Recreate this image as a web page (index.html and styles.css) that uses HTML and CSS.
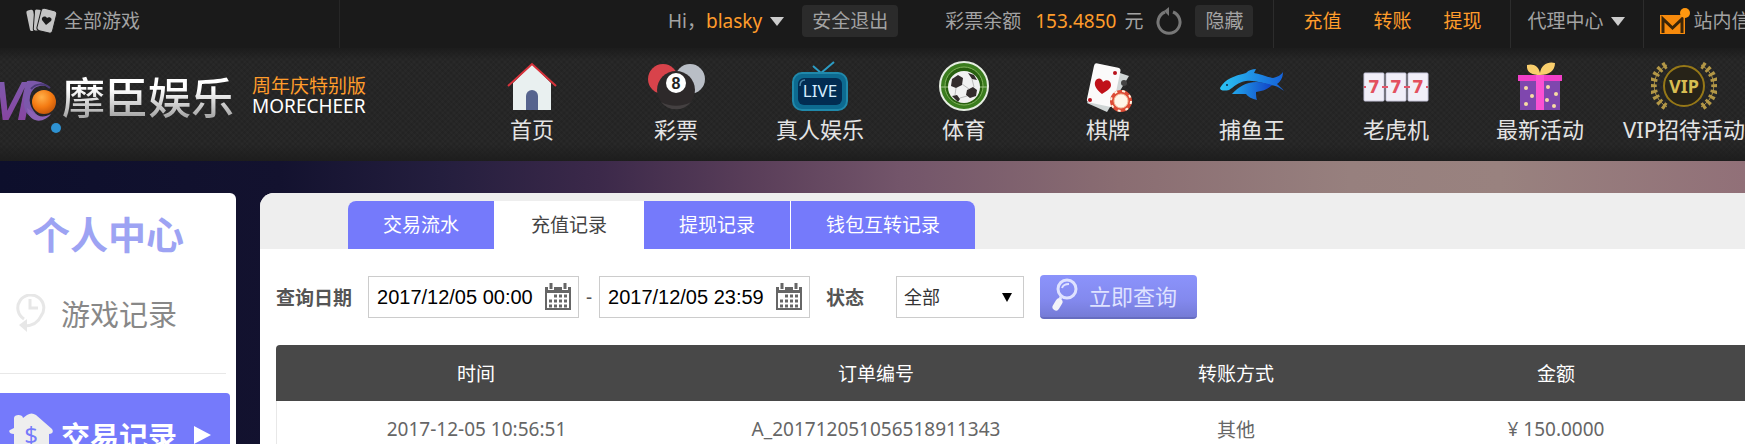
FILE: index.html
```html
<!DOCTYPE html>
<html lang="zh-CN">
<head>
  <meta charset="utf-8">
  <title>摩臣娱乐</title>
  <link rel="stylesheet" href="styles.css">
</head>
<body>
  <div class="topbar">
    <a href="#" class="all-games">
      <svg width="32" height="28" viewBox="0 0 32 28">
        <g fill="#c4c4c4">
          <rect x="3" y="3" width="7" height="21" rx="2" transform="rotate(-12 6 13)"/>
          <rect x="9" y="2" width="7" height="22" rx="2" transform="rotate(4 12 12)" stroke="#1a1a1a"/>
          <rect x="14" y="2" width="16" height="23" rx="3" transform="rotate(14 21 13)" stroke="#1a1a1a"/>
        </g>
        <path d="M21 18l-4-5c-1-3 3-5 5-2 2-2 6 0 4 3z" fill="#1a1a1a"/>
      </svg>
      全部游戏
    </a>
    <div class="user">
      <span>Hi，</span><a href="#" class="orange">blasky</a>
      <span class="caret"></span>
      <button type="button" class="top-btn">安全退出</button>
    </div>
    <div class="balance">
      <span>彩票余额</span>
      <span class="orange amount">153.4850</span>
      <span>元</span>
      <svg class="refresh" width="28" height="28" viewBox="0 0 28 28">
        <path d="M18 5a11 11 0 1 1-8 0" fill="none" stroke="#777" stroke-width="3"/>
        <path d="M14 0v9l-5-5z" fill="#777"/>
      </svg>
      <button type="button" class="top-btn">隐藏</button>
    </div>
    <div class="money">
      <a href="#" class="orange">充值</a>
      <a href="#" class="orange">转账</a>
      <a href="#" class="orange">提现</a>
    </div>
    <div class="agent"><a href="#">代理中心</a><span class="caret"></span></div>
    <a href="#" class="mail">
      <svg width="32" height="28" viewBox="0 0 32 28">
        <rect x="1" y="8" width="25" height="19" fill="#f78a0c"/>
        <path d="M4 26V12l9.500 9L23 12v14" fill="none" stroke="#3a2508" stroke-width="3"/>
        <circle cx="26" cy="6" r="5" fill="#ff970f"/>
      </svg>
      站内信
    </a>
  </div>

  <header class="header">
    <a href="#" class="logo">
      <svg width="62" height="60" viewBox="0 0 62 60">
        <defs>
          <linearGradient id="purple" x1="0" y1="0" x2="0" y2="1">
            <stop offset="0" stop-color="#7b5fb0"/><stop offset="1" stop-color="#8a3f9d"/>
          </linearGradient>
          <radialGradient id="ball" cx=".4" cy=".3" r=".7">
            <stop offset="0" stop-color="#ffb04a"/><stop offset=".6" stop-color="#f47a12"/><stop offset="1" stop-color="#c95a0a"/>
          </radialGradient>
        </defs>
        <text x="-15" y="44" class="logo-m" fill="url(#purple)">M</text>
        <path d="M27 5c9-1 17 1 22 6-7-3-15-1-18 6-4 9 1 19 11 26-12 2-19-7-18-18 0-7 1-14 3-20z" fill="#7c58ab"/>
        <path d="M33 36c5 5 11 6 18 2-4 5-10 8-16 6-5-2-7-6-8-12z" fill="#8c62b4"/>
        <path d="M31 13c5-6 13-6 19-1" fill="none" stroke="#4c3b78" stroke-width="2"/>
        <circle cx="44" cy="26" r="12" fill="url(#ball)"/>
        <circle cx="56" cy="52" r="5" fill="#2e92d2"/>
      </svg>
      <span class="logo-text">摩臣娱乐</span>
      <span class="slogan"><em>周年庆特别版</em>MORECHEER</span>
    </a>
    <nav class="nav">
      <a href="#">
        <svg width="50" height="50" viewBox="0 0 50 50">
          <path d="M6 49V22L25 3l19 19v27z" fill="#e9f0f0"/>
          <path d="M1 25L25 3l24 22" fill="none" stroke="#d9333c" stroke-width="2"/>
          <path d="M19 49V35a6 6 0 0 1 12 0v14z" fill="#56648e"/>
        </svg>
        首页
      </a>
      <a href="#">
        <svg width="58" height="50" viewBox="0 0 58 50">
          <circle cx="16" cy="18" r="15" fill="#d8434b"/>
          <circle cx="43" cy="18" r="15" fill="#b9bec6"/>
          <circle cx="29" cy="29" r="19" fill="#2d292a"/>
          <path d="M14 41a19 19 0 0 0 30 0c-9 5-21 5-30 0z" fill="#444041"/>
          <circle cx="29" cy="22" r="10" fill="#fff"/>
          <text x="29" y="28" class="ball-num">8</text>
        </svg>
        彩票
      </a>
      <a href="#">
        <svg width="58" height="50" viewBox="0 0 58 50">
          <path d="M22 5l8 7L43 1" fill="none" stroke="#2c9cc4" stroke-width="2"/>
          <rect x="2" y="12" width="54" height="37" rx="9" fill="#0d6a90" stroke="#2089ab" stroke-width="2"/>
          <rect x="7" y="17" width="44" height="27" rx="6" fill="#022c52"/>
          <path d="M9 25c0-4 1-6 5-6" fill="none" stroke="#4d86a8" stroke-width="1.500"/>
          <text x="29" y="36" class="live">LIVE</text>
        </svg>
        真人娱乐
      </a>
      <a href="#">
        <svg width="50" height="50" viewBox="0 0 50 50">
          <circle cx="25" cy="25" r="24" fill="#3b7d1e" stroke="#e6eee2" stroke-width="2"/>
          <circle cx="25" cy="25" r="19" fill="#28600f" stroke="#83b45e" stroke-width="1"/>
          <path d="M2 26h46" stroke="#9fc386"/>
          <circle cx="25" cy="26" r="16" fill="#f1f1f1"/>
          <path d="M13 18l6-4 5 3-1 7-6 3-5-2zM28 29l6-3 4 3-1 6-6 2-4-3zM29 12l6 2 3 5-5-1zM13 35l5-1 3 4-2 3z" fill="#332c2c"/>
          <path d="M23 23l7 5M17 27l-1 7M21 37l7-2M33 18l2 8" stroke="#bbb" fill="none"/>
        </svg>
        体育
      </a>
      <a href="#">
        <svg width="50" height="52" viewBox="0 0 50 52">
          <path d="M25 8l21 7-22 36-20-9z" fill="#cfd5d5"/>
          <rect x="7" y="4" width="27" height="40" rx="3" fill="#fbfafa" transform="rotate(12 20 25)"/>
          <path d="M19 33c-5-4-8-8-7-12 2-5 7-4 8 0 3-3 8-2 8 3 0 4-5 6-9 9z" fill="#c01119"/>
          <circle cx="32" cy="12" r="2" fill="#b8111b"/><circle cx="7" cy="39" r="2" fill="#b8111b"/>
          <circle cx="41" cy="22" r="3" fill="#444"/>
          <circle cx="38" cy="40" r="11" fill="#dd4b35"/>
          <circle cx="38" cy="40" r="10" fill="none" stroke="#fff1df" stroke-width="2" stroke-dasharray="3 5"/>
          <circle cx="38" cy="40" r="7" fill="#fff5e8" stroke="#f5bf9e"/>
        </svg>
        棋牌
      </a>
      <a href="#">
        <svg width="66" height="50" viewBox="0 0 66 50">
          <defs>
            <linearGradient id="fish-top" x1="0" y1="0" x2="1" y2="0">
              <stop offset="0" stop-color="#2bc3f2"/><stop offset="1" stop-color="#1560d8"/>
            </linearGradient>
            <linearGradient id="fish-belly" x1="0" y1="0" x2="1" y2="0">
              <stop offset="0" stop-color="#22a8ec"/><stop offset="1" stop-color="#1242c6"/>
            </linearGradient>
          </defs>
          <path d="M1 27c5-9 14-12 26-15 3-3 6-4 10-4l-2 4c7 1 12 4 19 5 5-1 8-3 10-6 0 6-3 10-6 12 2 2 5 4 7 7-5-4-9-6-14-6-8-2-15-5-24-4-8 1-12 6-17 9-4 1-9 1-9-2z" fill="url(#fish-top)"/>
          <path d="M13 33c6-7 14-12 24-12 7 0 12 2 16 3-4 4-9 6-16 7 0 3 0 5 1 8-5-1-9-3-11-6-5 0-9 0-14 0z" fill="url(#fish-belly)"/>
          <circle cx="8" cy="24" r="1" fill="#0b2742"/>
        </svg>
        捕鱼王
      </a>
      <a href="#">
        <svg width="66" height="50" viewBox="0 0 66 50">
          <g fill="#f1eff8" stroke="#c9c8dd">
            <rect x="1" y="12" width="20" height="28" rx="1"/><rect x="23" y="12" width="20" height="28" rx="1"/><rect x="45" y="12" width="20" height="28" rx="1"/>
          </g>
          <path d="M1 26h2M19 26h6M41 26h6M63 26h2" stroke="#e3566b" stroke-width="2"/>
          <text x="11" y="32" class="seven">7</text><text x="33" y="32" class="seven">7</text><text x="55" y="32" class="seven">7</text>
        </svg>
        老虎机
      </a>
      <a href="#">
        <svg width="46" height="50" viewBox="0 0 46 50">
          <path d="M23 14C16 14 9 12 10 4c6-2 12 1 13 8C24 4 31 0 38 2c0 8-6 12-15 12z" fill="#f9ce6c"/>
          <rect x="3" y="18" width="40" height="31" fill="#7f47ae"/>
          <rect x="1" y="14" width="44" height="6" fill="#f23fc8"/>
          <rect x="19" y="14" width="8" height="35" fill="#fb51d3"/>
          <g fill="#f8dca4"><circle cx="9" cy="27" r="2"/><circle cx="15" cy="35" r="2"/><circle cx="9" cy="43" r="2"/><circle cx="31" cy="26" r="2"/><circle cx="39" cy="33" r="2"/><circle cx="30" cy="39" r="2"/><circle cx="37" cy="45" r="2"/></g>
        </svg>
        最新活动
      </a>
      <a href="#">
        <svg width="66" height="50" viewBox="0 0 66 50">
          <circle cx="33" cy="25" r="20" fill="#272318" stroke="#967817" stroke-width="2"/>
          <g fill="none" stroke="#b39746">
            <path d="M16 4C-1 13-1 36 16 46M50 4c17 9 17 32 0 42"/>
            <path d="M15 4C-2 13-2 36 15 46M51 4c17 9 17 32 0 42" stroke-width="7" stroke-dasharray="3 3"/>
          </g>
          <text x="33" y="32" class="vip">VIP</text>
        </svg>
        VIP招待活动
      </a>
    </nav>
  </header>

  <main class="content">
    <aside class="sidebar">
      <h2>个人中心</h2>
      <a href="#" class="side-item">
        <svg width="32" height="38" viewBox="0 0 32 38">
          <path d="M9 25A13 13 0 1 1 26 22C23 29 16 32 9 32" fill="none" stroke="#e7e7e7" stroke-width="3"/>
          <path d="M15 5v9h8" fill="none" stroke="#e7e7e7" stroke-width="3"/>
          <path d="M12 25v13l-8-7z" fill="#e7e7e7"/>
        </svg>
        游戏记录
      </a>
      <a href="#" class="side-item active">
        <svg width="44" height="44" viewBox="0 0 44 44">
          <path d="M5 15V5c0-4 9-4 9 0l4-3c3-2 6-2 9 0l16 14c2 3 0 5-3 5v22H5V21c-4 0-6-3-4-4z" fill="#eee"/>
          <text x="22" y="31" class="dollar">$</text>
        </svg>
        交易记录
        <svg class="arrow" width="18" height="18" viewBox="0 0 18 18"><path d="M0 0l17 9-17 9z" fill="#fff"/></svg>
      </a>
    </aside>

    <section class="panel">
      <div class="panel-head">
        <ul class="tabs">
          <li><a href="#">交易流水</a></li>
          <li><a href="#" class="current">充值记录</a></li>
          <li><a href="#">提现记录</a></li>
          <li><a href="#">钱包互转记录</a></li>
        </ul>
      </div>

      <form class="search">
        <label for="date_from">查询日期</label>
        <span class="date-box">
          <input type="text" id="date_from" value="2017/12/05 00:00">
          <svg width="28" height="28" viewBox="0 0 28 28">
            <path d="M1 4h26v6H1z" fill="#666"/>
            <path d="M2 5v21h24V5" fill="none" stroke="#666" stroke-width="2"/>
            <path d="M7 0v7M21 0v7" stroke="#fff" stroke-width="6"/><path d="M7 0v6M21 0v6" stroke="#666" stroke-width="3"/>
            <path d="M10 13h14M5 18h19M5 23h19" stroke="#666" stroke-width="3" stroke-dasharray="3 2"/>
          </svg>
        </span>
        <label for="date_to" class="dash">-</label>
        <span class="date-box">
          <input type="text" id="date_to" value="2017/12/05 23:59">
          <svg width="28" height="28" viewBox="0 0 28 28">
            <path d="M1 4h26v6H1z" fill="#666"/>
            <path d="M2 5v21h24V5" fill="none" stroke="#666" stroke-width="2"/>
            <path d="M7 0v7M21 0v7" stroke="#fff" stroke-width="6"/><path d="M7 0v6M21 0v6" stroke="#666" stroke-width="3"/>
            <path d="M10 13h14M5 18h19M5 23h19" stroke="#666" stroke-width="3" stroke-dasharray="3 2"/>
          </svg>
        </span>
        <label for="status" class="status-label">状态</label>
        <span class="select-box">
          <select id="status"><option>全部</option></select>
        </span>
        <button type="submit" class="search-btn">
          <svg width="26" height="34" viewBox="0 0 26 34">
            <circle cx="15" cy="11" r="9" fill="none" stroke="#dfe2ff" stroke-width="3"/>
            <path d="M10 10c1-3 4-4 7-4" fill="none" stroke="#dfe2ff" stroke-width="2"/>
            <path d="M9 19l-2 4" stroke="#dfe2ff" stroke-width="3"/>
            <path d="M7 24l-3 5" stroke="#f3f3f8" stroke-width="7" stroke-linecap="round"/>
          </svg>
          立即查询
        </button>
      </form>

      <table class="records">
        <colgroup><col class="wide"><col class="wide"><col class="mid"><col class="mid"><col></colgroup>
        <thead>
          <tr><th>时间</th><th>订单编号</th><th>转账方式</th><th>金额</th><th></th></tr>
        </thead>
        <tbody>
          <tr><td>2017-12-05 10:56:51</td><td>A_201712051056518911343</td><td>其他</td><td>¥ 150.0000</td><td></td></tr>
        </tbody>
      </table>
    </section>
  </main>
</body>
</html>
```
FILE: styles.css
```css
:root {
  --main-color: #757afb;
  --orange: #ff9c2b;
  --text-gray: #a3a3a3;
}

* {
  box-sizing: border-box;
}

body {
  font-family: "Noto Sans", "Noto Sans CJK SC", sans-serif;
  font-size: 19px;
  margin: 0;
  min-height: 100vh;
  display: flex;
  flex-direction: column;
  overflow: hidden;
  white-space: nowrap;
  background-color: #0d0f30;
}

a {
  color: inherit;
  text-decoration: none;
}

button, select {
  font-family: inherit;
}

svg {
  flex: none;
}

/* top bar */
.topbar {
  display: flex;
  height: 48px;
  line-height: 44px;
  background-color: #1a1a1a;
  color: var(--text-gray);
}

.topbar > * {
  display: flex;
  flex: none;
  align-items: center;
  height: 48px;
  padding-bottom: 6px;
}

.all-games {
  width: 340px;
  padding-left: 25px;
  gap: 7px;
  border-right: 1px solid #262626;
}

.orange {
  color: var(--orange);
}

.user {
  padding-left: 328px;
}

.caret {
  margin-left: 8px;
  border: 7px solid transparent;
  border-top: 9px solid #ccc;
  border-bottom: 0;
}

.top-btn {
  height: 32px;
  padding: 0 10px;
  border: 0;
  border-radius: 4px;
  background-color: #2b2b2b;
  color: var(--text-gray);
  font-size: 19px;
  line-height: 32px;
}

.user .top-btn {
  margin-left: 18px;
}

.balance {
  padding-left: 47px;
  padding-right: 20px;
  border-right: 1px solid #2c2c2c;
}

.amount {
  margin: 0 8px 0 14px;
}

.refresh {
  margin: 0 12px;
}

.money {
  gap: 32px;
  padding-left: 29px;
  padding-right: 29px;
  border-right: 1px solid #2c2c2c;
}

.agent {
  padding-left: 16px;
  padding-right: 18px;
  border-right: 1px solid #2c2c2c;
}

.mail {
  padding-left: 15px;
  gap: 2px;
}

/* header */
.header {
  display: flex;
  height: 113px;
  background-color: #292929;
  background-image:
    linear-gradient(#1c1c1c, transparent 12px, transparent 96px, #1d1d1d),
    repeating-linear-gradient(45deg, rgba(0, 0, 0, 0.08) 0 2px, transparent 2px 4px),
    repeating-linear-gradient(-45deg, rgba(0, 0, 0, 0.08) 0 2px, transparent 2px 4px);
}

.logo {
  display: flex;
  flex: none;
  align-items: flex-start;
  width: 460px;
  padding-top: 28px;
}

.logo-m {
  font: italic bold 56px "Liberation Sans", sans-serif;
}

.logo-text {
  font-size: 43px;
  line-height: 44px;
  font-weight: 500;
  color: transparent;
  background: linear-gradient(#fff 30%, #aaa 90%);
  background-clip: text;
}

.slogan {
  margin-left: 18px;
  color: #fff;
  line-height: 20px;
}

.slogan em {
  display: block;
  color: var(--orange);
  font-style: normal;
}

.nav {
  display: flex;
}

.nav a {
  display: flex;
  flex: none;
  flex-direction: column;
  align-items: center;
  justify-content: space-between;
  width: 144px;
  height: 97px;
  padding-top: 13px;
  color: #e4e4e4;
  font-size: 22px;
  line-height: 32px;
}

.ball-num, .live, .seven, .vip, .dollar {
  text-anchor: middle;
}

.ball-num {
  font: bold 16px "Liberation Sans", sans-serif;
  fill: #222;
}

.live {
  font: 17px "Noto Sans", sans-serif;
  fill: #d5eeff;
}

.seven {
  font: bold 17px "DejaVu Sans", sans-serif;
  fill: #e3505f;
}

.vip {
  font: bold 18px "Noto Sans", sans-serif;
  fill: #d8bd52;
}

.dollar {
  font: 24px "Noto Sans", sans-serif;
  fill: var(--main-color);
}

/* content */
.content {
  display: flex;
  flex: 1;
  align-items: stretch;
  gap: 24px;
  padding-top: 32px;
  background: linear-gradient(90deg, #0d0f2c 0, #13122f 280px, #241e3e 440px, #3c294a 600px, #5b3f5a 760px, #73556a 900px, #8a6d72 1120px, #97807e 1350px, #99827f 1500px, #917078 1745px);
}

.sidebar {
  flex: none;
  width: 236px;
  padding-right: 6px;
  background-color: #fff;
  border-radius: 0 6px 0 0;
}

.sidebar h2 {
  margin: 0;
  padding: 18px 0 2px 32px;
  color: #9da3f3;
  font-size: 38px;
  line-height: 46px;
}

.side-item {
  display: flex;
  align-items: center;
  gap: 14px;
  height: 115px;
  margin-right: 4px;
  padding-left: 15px;
  padding-bottom: 6px;
  border-bottom: 1px solid #e8e8e8;
  color: #888;
  font-size: 29px;
}

.side-item.active {
  gap: 8px;
  height: 84px;
  margin: 19px 0 0;
  padding: 0 0 0 9px;
  border: 0;
  border-radius: 0 4px 4px 0;
  background-color: var(--main-color);
  color: #fff;
  font-weight: bold;
}

.arrow {
  margin-left: 9px;
}

.panel {
  flex: 1 0 1632px;
  background-color: #fff;
  border-radius: 14px 0 0 0;
}

.panel-head {
  padding: 8px 0 0 88px;
  background-color: #eee;
  border-radius: 14px 0 0 0;
}

.tabs {
  display: inline-flex;
  gap: 1px;
  margin: 0;
  padding: 0;
  list-style: none;
  vertical-align: top;
  background-color: #fff;
  border-radius: 8px 8px 0 0;
}

.tabs a {
  display: block;
  padding: 0 35px;
  background-color: var(--main-color);
  color: #fff;
  line-height: 48px;
}

.tabs li:first-child a {
  border-radius: 8px 0 0 0;
}

.tabs li:last-child a {
  border-radius: 0 8px 0 0;
}

.tabs .current {
  padding: 0 36px;
  background-color: #fff;
  color: #444;
}

.search {
  display: flex;
  align-items: center;
  height: 96px;
  padding-left: 16px;
  color: #555;
}

.search label {
  margin-right: 16px;
  font-weight: bold;
}

.date-box {
  display: flex;
  align-items: center;
  width: 211px;
  height: 42px;
  padding: 0 6px 0 8px;
  border: 1px solid #ccc;
}

.date-box input {
  flex: 1;
  min-width: 0;
  padding: 0;
  border: 0;
  outline: 0;
  background: none;
  color: #000;
  font: 20px "Liberation Sans", Arial, sans-serif;
}

.search .dash {
  width: 20px;
  margin: 0;
  font-weight: normal;
  text-align: center;
}

.search .status-label {
  margin: 0 32px 0 16px;
}

.select-box {
  position: relative;
  margin-right: 16px;
}

.select-box::after {
  content: "";
  position: absolute;
  right: 12px;
  top: 17px;
  border: 5px solid transparent;
  border-top: 9px solid #000;
  border-bottom: 0;
  pointer-events: none;
}

.select-box select {
  display: block;
  width: 128px;
  height: 42px;
  padding: 0 7px;
  border: 1px solid #ccc;
  border-radius: 0;
  appearance: none;
  background-color: #fff;
  color: #333;
  font-size: 18px;
}

.search-btn {
  display: flex;
  align-items: center;
  gap: 11px;
  width: 157px;
  height: 44px;
  padding: 0 0 2px 12px;
  border: 0;
  border-bottom: 2px solid #666cc0;
  border-radius: 4px;
  background: linear-gradient(#8b93fb, #8389ee 60%, #757bd6);
  color: #dfe2ff;
  font-size: 22px;
}

.records {
  width: 1600px;
  margin-left: 16px;
  border-spacing: 0;
  table-layout: fixed;
  text-align: center;
}

.records .wide {
  width: 25%;
}

.records .mid {
  width: 20%;
}

.records th {
  height: 56px;
  padding: 0;
  background-color: #484848;
  color: #fff;
  font-weight: normal;
}

.records th:first-child {
  border-radius: 4px 0 0 0;
}

.records td {
  height: 56px;
  padding: 0;
  color: #666;
}

.records td:first-child {
  border-left: 1px solid #e8e8e8;
}
```
